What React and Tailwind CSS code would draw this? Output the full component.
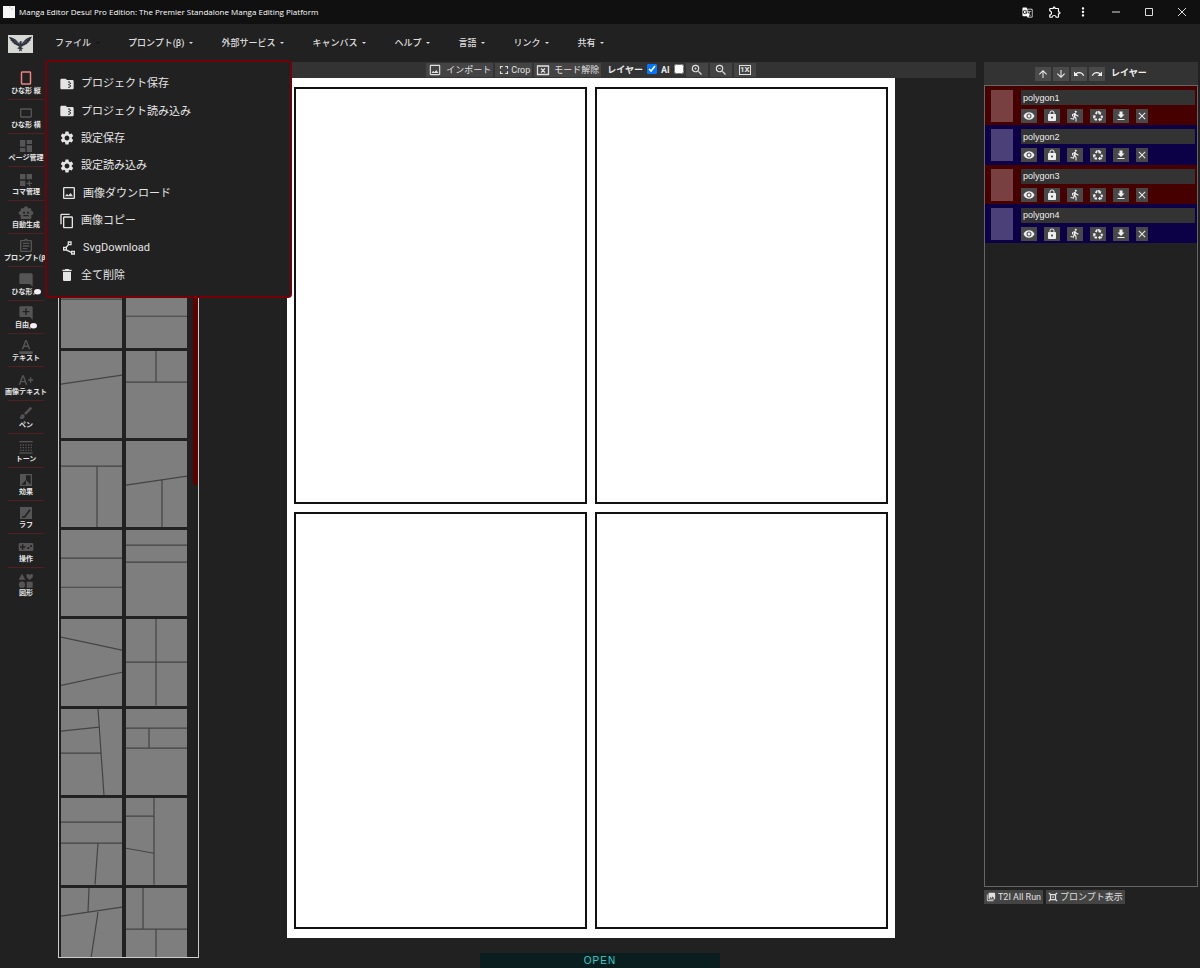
import React from 'react';
import clsx from 'clsx';
import {
  MdArrowDownward, MdArrowUpward, MdBrush, MdClose, MdContentCopy, MdCropLandscape, MdCropPortrait, MdDashboard,
  MdDashboardCustomize, MdDelete, MdDirectionsRun, MdFileDownload, MdFolderZip, MdFullscreen, MdLock, MdMoreVert,
  MdOutlineAssignment, MdOutlineExtension, MdOutlineImage, MdPhotoLibrary, MdOutlinePolyline, MdRecycling, MdRedo,
  MdSettings, MdSmartToy, MdUndo, MdVisibility, MdZoomIn, MdZoomOut, MdFormatColorText, MdOutlineTextIncrease,
  MdVideogameAsset, MdAddComment, MdModeComment, MdGTranslate,
} from 'react-icons/md';

const menus = ['ファイル', 'プロンプト(β)', '外部サービス', 'キャンバス', 'ヘルプ', '言語', 'リンク', '共有'];

const fileItems = [
  { label: 'プロジェクト保存', icon: MdFolderZip },
  { label: 'プロジェクト読み込み', icon: MdFolderZip },
  { label: '設定保存', icon: MdSettings },
  { label: '設定読み込み', icon: MdSettings },
  { label: '画像ダウンロード', icon: MdOutlineImage, inset: true },
  { label: '画像コピー', icon: MdContentCopy },
  { label: 'SvgDownload', icon: MdOutlinePolyline, inset: true },
  { label: '全て削除', icon: MdDelete },
];

// Dotted screen-tone swatch
function ToneIcon(props) {
  return (
    <svg viewBox="0 0 24 24" fill="none" stroke="currentColor" strokeWidth="2" {...props}>
      <path d="M2 4h20" />
      <path d="M3 9h20M3 13h20M3 17h20" strokeDasharray="2 2" />
      <path d="M2 21h20" />
    </svg>
  );
}

function ShapesIcon(props) {
  return (
    <svg viewBox="0 0 24 24" fill="currentColor" {...props}>
      <path d="M6 1 11 10H1zM17.500 10.500C14 8 12.500 6 12.500 4.200 12.500 1.300 16 .8 17.500 3.200 19 .8 22.500 1.300 22.500 4.200 22.500 6 21 8 17.500 10.500zM13 13h9v9h-9z" />
      <circle cx="6" cy="17.500" r="4.700" />
    </svg>
  );
}

function EffectIcon(props) {
  return (
    <svg viewBox="0 0 24 24" fill="currentColor" {...props}>
      <path d="M3 3h18v18H3zM12 5v7l-7 7h7v-7l7 7V5z" fillRule="evenodd" />
    </svg>
  );
}

function RoughIcon(props) {
  return (
    <svg viewBox="0 0 24 24" {...props}>
      <path d="M3 3h18v18H3z" fill="currentColor" />
      <path d="M6 18h4l8-11" fill="none" stroke="#212121" strokeWidth="2.500" />
    </svg>
  );
}

const Balloon = () => (
  <svg viewBox="0 0 16 12" className="h-1.5 w-2 shrink-0" fill="#f4eefa">
    <ellipse cx="9" cy="5.500" rx="7" ry="5.500" />
    <circle cx="2" cy="10" r="1.500" />
  </svg>
);

const tools = [
  { label: 'ひな形 縦', icon: MdCropPortrait, active: true },
  { label: 'ひな形 横', icon: MdCropLandscape },
  { label: 'ページ管理', icon: MdDashboard },
  { label: 'コマ管理', icon: MdDashboardCustomize },
  { label: '自動生成', icon: MdSmartToy },
  { label: 'プロンプト(β)', icon: MdOutlineAssignment },
  { label: 'ひな形', icon: MdModeComment, balloon: true },
  { label: '自由', icon: MdAddComment, balloon: true },
  { label: 'テキスト', icon: MdFormatColorText },
  { label: '画像テキスト', icon: MdOutlineTextIncrease },
  { label: 'ペン', icon: MdBrush },
  { label: 'トーン', icon: ToneIcon },
  { label: '効果', icon: EffectIcon },
  { label: 'ラフ', icon: RoughIcon },
  { label: '操作', icon: MdVideogameAsset },
  { label: '図形', icon: ShapesIcon },
];

// Cut lines of each page template, on a 61 x 86 page
const templates = [
  'M0 43H61', 'M30 0V86',
  'M0 28H61', 'M0 43H61M30 43V86',
  'M0 37H61', 'M0 22H61M0 54H61',
  'M0 33 61 24', 'M30 0V31M0 31H61',
  'M0 25H61M36 25V86', 'M0 44 61 35M36 39V86',
  'M0 28H61M0 57H61', 'M0 15H61M0 32H61',
  'M0 18 61 31M0 66 61 53', 'M30 0V86M0 43H61',
  'M37 0 43 86M0 22 38 18M0 44H40', 'M0 19H61M0 39H61M23 19V39',
  'M0 24H61M0 45H61M37 45 34 86', 'M28 0V86M0 18H28M0 50 28 55',
  'M0 28 61 19M28 0 27 24M37 24 30 70', 'M17 0V41M0 41H61M30 41V86',
];

const layers = ['polygon1', 'polygon2', 'polygon3', 'polygon4'];

const layerActions = [
  { label: '表示', icon: MdVisibility },
  { label: 'ロック', icon: MdLock },
  { label: '実行', icon: MdDirectionsRun },
  { label: '再生成', icon: MdRecycling },
  { label: '保存', icon: MdFileDownload },
];

const historyActions = [
  { label: '上へ', icon: MdArrowUpward },
  { label: '下へ', icon: MdArrowDownward },
  { label: '元に戻す', icon: MdUndo },
  { label: 'やり直し', icon: MdRedo },
];

function TitleBar() {
  return (
    <header className="flex h-6 shrink-0 items-center bg-[#101010] pr-1 pl-[3px] text-white">
      <svg viewBox="0 0 12 12" className="size-3">
        <path d="M0 0h12v12H0z" fill="#f5f5f5" />
        <path d="M6 1h2M9 2v2" stroke="#999" strokeWidth=".5" />
      </svg>
      <h1 className="ml-1 font-['Open_Sans',sans-serif] text-[8px]">
        Manga Editor Desu! Pro Edition: The Premier Standalone Manga Editing Platform
      </h1>
      <div className="ml-auto flex items-center">
        <button aria-label="翻訳" className="flex w-7 justify-center"><MdGTranslate className="size-[11px]" /></button>
        <button aria-label="拡張機能" className="flex w-7 justify-center"><MdOutlineExtension className="size-3.5" /></button>
        <button aria-label="メニュー" className="flex w-7 justify-center"><MdMoreVert className="size-3.5" /></button>
        {['M1 5h8', 'M1.500 1.500h7v7h-7z', 'M1 1l8 8M9 1 1 9'].map((d, i) => (
          <button key={d} aria-label={['最小化', '最大化', '閉じる'][i]} className="flex w-[33px] justify-center pl-1">
            <svg viewBox="0 0 10 10" className="size-2.5" fill="none" stroke="#ddd">
              <path d={d} />
            </svg>
          </button>
        ))}
      </div>
    </header>
  );
}

function Logo() {
  return (
    <svg viewBox="0 0 50 36" className="h-[18px] w-[25px]">
      <path d="M0 0h50v36H0z" fill="#d6d8d4" />
      {/* wings */}
      <path
        d="M2 4c7 1 13 4 17 9l5 6-1 4-4-1 1-1-5-1 1-1-5-1 1-2-5-2 2-1-5-3 2-1C4 8 3 6 2 4zM48 3c-7 1-13 5-17 10l-5 6 1 4 4-1-1-1 5-1-1-1 5-1-1-2 5-2-2-1 5-3-2-1c2-1 3-4 4-6z"
        fill="#262c38"
      />
      {/* head, body and tail */}
      <path d="M23 14l2-2 3 1-1 3 1 5-1 4 4 2-4 1 1 5-3-2-3 2 1-5-5-1 4-3z" fill="#33373d" />
      <path d="M8 7l12 9M42 7l-12 9M12 13l9 5M38 13l-9 5" stroke="#6c7480" strokeWidth=".8" />
    </svg>
  );
}

function MenuBar() {
  return (
    <nav className="relative z-10 flex h-[38px] shrink-0 items-center pl-2">
      <a href="#home" aria-label="ホーム" className="mt-0.5"><Logo /></a>
      <div className="ml-[22px] flex gap-7">
        {menus.map((m, i) => (
          <button key={m} className="flex items-center gap-[5px] text-[9px] font-medium text-[#ddd]">
            {m}
            <svg viewBox="0 0 4 2" className={clsx('h-0.5 w-1', i === 0 ? 'fill-[#111]' : 'fill-[#ddd]')}>
              <path d="M0 0h4L2 2z" />
            </svg>
          </button>
        ))}
      </div>
      <div className="absolute top-9 left-[45px] w-[247px] rounded border-2 border-[#740008] bg-[#212121] pt-2 pb-[7px] pl-3">
        <ul className="grid h-[219px] auto-rows-fr">
          {fileItems.map(({ label, icon: Icon, inset }) => (
            <li key={label} className="flex">
              <button className={clsx('flex w-full items-center text-[11px] text-[#e4e4e4]', inset && 'pl-0.5')}>
                <Icon className="mr-1.5 size-4" />
                {label}
              </button>
            </li>
          ))}
        </ul>
      </div>
    </nav>
  );
}

function ToolRail() {
  return (
    <aside className="w-[58px] shrink-0 pt-[5px] pl-2">
      <div className="grid h-[534px] w-9 auto-rows-fr grid-cols-1">
        {tools.map(({ label, icon: Icon, active, balloon }, i) => (
          <button
            key={i}
            className={clsx(
              'flex flex-col items-center justify-end pb-[3px]',
              i < tools.length - 1 && 'border-b border-[#502020]',
            )}
          >
            <Icon className={clsx('shrink-0', active ? 'size-[18px] text-[#f08080]' : 'size-4 text-[#555]')} />
            <span className="flex items-center text-[7px] leading-[9px] font-bold whitespace-nowrap text-[#e4e4e4]">
              {label}
              {balloon && <Balloon />}
            </span>
          </button>
        ))}
      </div>
    </aside>
  );
}

function TemplatePanel() {
  return (
    <aside className="mb-2.5 flex w-[141px] shrink-0 justify-between overflow-hidden border border-[#ccc] bg-[#212121]">
      <div className="grid h-[911px] grid-cols-[61px_61px] grid-rows-10 gap-x-1 gap-y-[3px] pt-5 pl-0.5">
        {templates.map((d, i) => (
          <button key={i} aria-label={`テンプレート${i + 1}`} className="bg-[#7e7e7e]">
            <svg viewBox="0 0 61 86" preserveAspectRatio="none" className="size-full" fill="none" stroke="#444" strokeWidth="1.200">
              <path d={d} />
            </svg>
          </button>
        ))}
      </div>
      <div className="h-[422px] w-[5px] rounded-b bg-[#5c0000]" />
    </aside>
  );
}

const toolButton = 'flex h-3.5 items-center bg-[#444] text-[9px] text-[#e0e0e0]';

function Workspace() {
  return (
    <main className="ml-[7px] flex min-w-0 flex-1 flex-col items-center">
      <div className="flex h-4 w-full shrink-0 items-center justify-center gap-0.5 bg-[#333]">
        <button className={clsx(toolButton, 'gap-1 px-0.5')}><MdOutlineImage className="size-3.5" />インポート</button>
        <button className={clsx(toolButton, 'px-0.5')}><MdFullscreen className="size-3.5" />Crop</button>
        <button className={clsx(toolButton, 'gap-1 px-0.5')}>
          <svg viewBox="0 0 14 14" className="size-3.5" fill="none" stroke="currentColor" strokeWidth="1.300">
            <path d="M1.500 3h11v8.500h-11zM5 5.500l4 4M9 5.500l-4 4" />
          </svg>
          モード解除
        </button>
        <label className="ml-1 flex items-center gap-1 text-[9px] font-bold text-[#e8e8e8]">
          レイヤー
          <input type="checkbox" defaultChecked className="mb-0.5 size-2.5" />
        </label>
        <label className="ml-0.5 flex items-center gap-1 text-[9px] font-bold text-[#e8e8e8]">
          AI
          <input type="checkbox" className="mb-0.5 size-2.5" />
        </label>
        <button aria-label="拡大" className={clsx(toolButton, 'w-[22px] justify-center')}><MdZoomIn className="size-3.5" /></button>
        <button aria-label="縮小" className={clsx(toolButton, 'w-[22px] justify-center')}><MdZoomOut className="size-3.5" /></button>
        <button aria-label="等倍" className={clsx(toolButton, 'w-[22px] justify-center')}>
          <span className="flex h-2.5 w-3 items-center justify-center border border-current text-[8px] font-bold">1X</span>
        </button>
      </div>
      <div className="mb-[30px] grid aspect-[608/860] min-h-0 flex-1 grid-cols-2 grid-rows-2 gap-2 bg-white px-[7px] py-[9px]">
        {layers.map((l) => <div key={l} className="border-2 border-[#111]" />)}
      </div>
    </main>
  );
}

function LayerRow({ name, odd }) {
  return (
    <li className={clsx('flex min-h-0 pt-1 pl-1.5', odd ? 'bg-[#470000]' : 'bg-[#0c0047]')}>
      <div className={clsx('h-8 w-[22px] shrink-0', odd ? 'bg-[#784040]' : 'bg-[#4c4078]')} />
      <div className="ml-2 min-w-0 flex-1 pr-0.5">
        <input
          aria-label="レイヤー名"
          defaultValue={name}
          className="block h-[15px] w-full bg-[#333] px-0.5 font-['Liberation_Sans',sans-serif] text-[9px] text-[#eee]"
        />
        <div className="mt-1 flex gap-[7px]">
          {layerActions.map(({ label, icon: Icon }) => (
            <button key={label} aria-label={label} className="flex h-3.5 w-4 items-center justify-center bg-[#484848] text-[#eee]">
              <Icon className="size-3" />
            </button>
          ))}
          <button aria-label="削除" className="flex h-3.5 w-3 items-center justify-center bg-[#484848] text-[#eee]">
            <MdClose className="size-3 shrink-0" />
          </button>
        </div>
      </div>
    </li>
  );
}

function LayerPanel() {
  return (
    <aside className="mr-0.5 ml-2 flex w-[214px] shrink-0 flex-col">
      <div className="flex h-[23px] shrink-0 items-center gap-0.5 bg-[#333] pl-[51px]">
        {historyActions.map(({ label, icon: Icon }) => (
          <button key={label} aria-label={label} className="flex h-3.5 w-4 items-center justify-center bg-[#4a4a4a] text-[#eee]">
            <Icon className="size-3" />
          </button>
        ))}
        <h2 className="ml-1 text-[9px] font-bold text-[#eee]">レイヤー</h2>
      </div>
      <div className="flex-1 border border-[#666]">
        <ul className="grid h-[157px] auto-rows-fr">
          {layers.map((l, i) => <LayerRow key={l} name={l} odd={i % 2 === 0} />)}
        </ul>
      </div>
      <div className="mt-[3px] mb-16 flex gap-[3px]">
        <button className={clsx(toolButton, 'gap-0.5 px-0.5')}><MdPhotoLibrary className="size-2.5" />T2I All Run</button>
        <button className={clsx(toolButton, 'gap-0.5 px-0.5')}>
          <svg viewBox="0 0 12 12" className="size-2.5" fill="none" stroke="currentColor" strokeWidth="1.500">
            <path d="M3 3h6v6H3zM1 1l2 2M11 1 9 3M1 11l2-2M11 11 9 9M5 6h2" />
          </svg>
          プロンプト表示
        </button>
      </div>
    </aside>
  );
}

export default function App() {
  return (
    <div className="relative flex h-screen flex-col overflow-hidden bg-[#212121] font-[Roboto,'Noto_Sans_CJK_JP',sans-serif] leading-none">
      <TitleBar />
      <MenuBar />
      <div className="flex min-h-0 flex-1">
        <ToolRail />
        <TemplatePanel />
        <Workspace />
        <LayerPanel />
      </div>
      <button className="absolute bottom-0 left-1/2 h-[15px] w-60 -translate-x-1/2 bg-[#0a1e20] font-['Liberation_Sans',sans-serif] text-[10px] tracking-widest text-[#2fd0cc]">
        OPEN
      </button>
    </div>
  );
}
